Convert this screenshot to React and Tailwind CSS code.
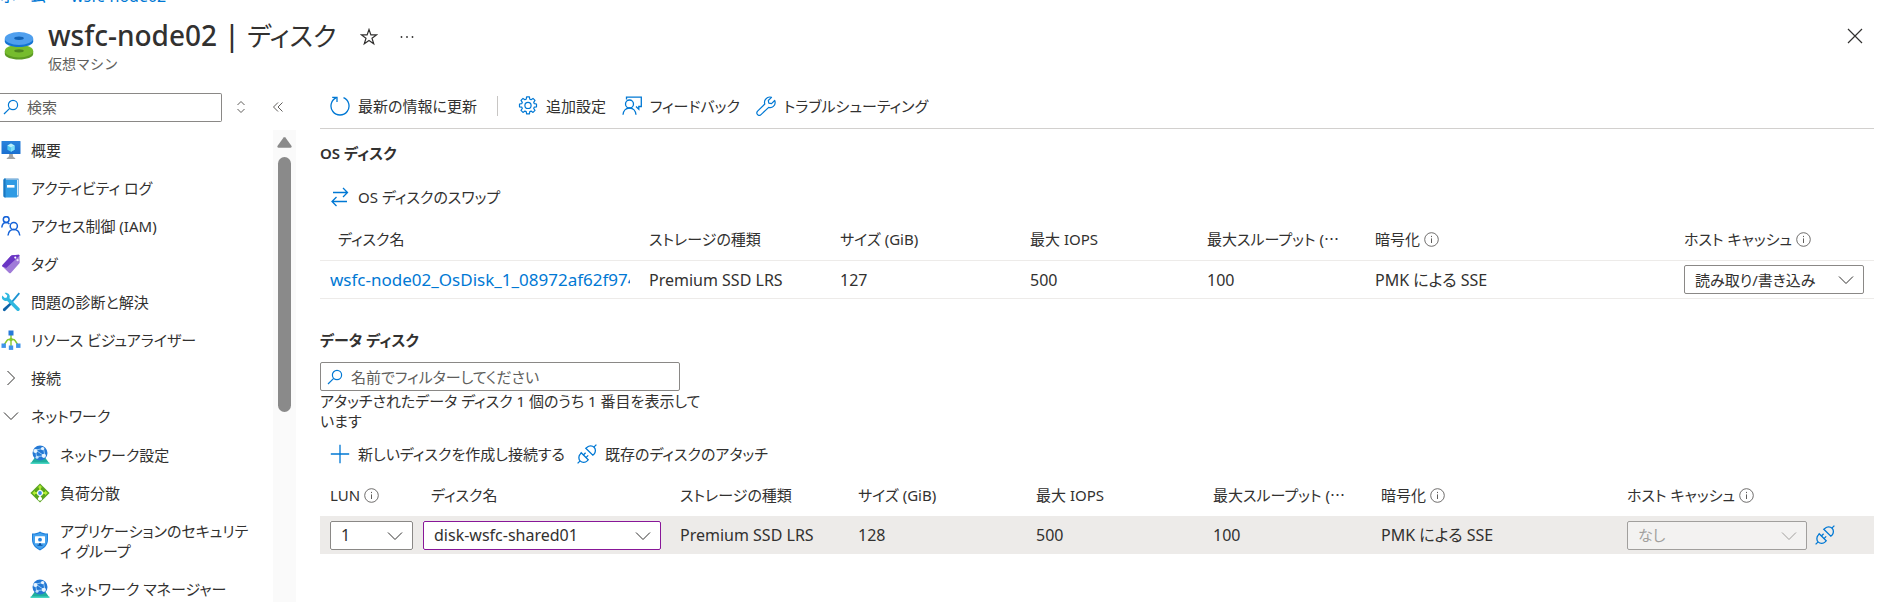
import React from 'react';

const menuItems = [
    { label: '概要', icon: MonitorIcon },
    { label: 'アクティビティ ログ', icon: LogIcon },
    { label: 'アクセス制御 (IAM)', icon: PeopleIcon },
    { label: 'タグ', icon: TagIcon },
    { label: '問題の診断と解決', icon: ToolsIcon },
    { label: 'リソース ビジュアライザー', icon: TreeIcon },
    { label: '接続', icon: ChevronRight },
    { label: 'ネットワーク', icon: ChevronDown },
];

const networkItems = [
    { lines: ['ネットワーク設定'], icon: GlobeIcon },
    { lines: ['負荷分散'], icon: BalancerIcon },
    { lines: ['アプリケーションのセキュリテ', 'ィ グループ'], icon: ShieldIcon },
    { lines: ['ネットワーク マネージャー'], icon: GlobeIcon },
];

function MonitorIcon() {
    return (
        <svg width="20" height="20" viewBox="0 0 20 20">
            <defs>
                <linearGradient id="monitor" x1="0" y1="0" x2="0" y2="1">
                    <stop offset="0" stopColor="#2a83dc" />
                    <stop offset="1" stopColor="#1a6fd0" />
                </linearGradient>
            </defs>
            <rect x="0.5" y="1" width="19" height="13" rx="0.6" fill="url(#monitor)" />
            <path d="M10 3.4l3.6 2v4.3L10 11.8 6.4 9.7V5.4z" fill="#50c8f0" />
            <path d="M10 3.4l3.6 2L10 7.5 6.4 5.4z" fill="#b9f0fb" />
            <path d="M10 7.5l3.6-2.1v4.3L10 11.8z" fill="#82dff7" />
            <path d="M8.2 14h3.6c0 2.4.5 3.5 2.4 4v1H5.8v-1c1.9-.5 2.4-1.6 2.4-4z" fill="#a3a3a3" />
        </svg>
    );
}

function LogIcon() {
    return (
        <svg width="20" height="20" viewBox="0 0 20 20">
            <path d="M4.2.6h13.3v18H4.2z" fill="#2b7fc4" />
            <path d="M5 1.5h12v16H5z" fill="#d7eefb" />
            <path d="M2.5 2.2c0-.9.7-1.6 1.6-1.6h.4v1.3H16v17.5H4.1c-.9 0-1.6-.7-1.6-1.6z" fill="#2f9be4" />
            <path d="M2.5 2.2c0-.9.7-1.6 1.6-1.6h.4v18.8h-.4c-.9 0-1.6-.7-1.6-1.6z" fill="#1b76bf" />
            <rect x="6" y="7" width="7.5" height="2.6" fill="#fff" />
        </svg>
    );
}

function PeopleIcon() {
    return (
        <svg width="20" height="20" viewBox="0 0 20 20" fill="none" stroke="#1663d8" strokeWidth="1.5">
            <circle cx="5.2" cy="3.6" r="2.9" />
            <path d="M.8 11.5c.3-3 2-5 4.4-5 1.3 0 2.4.5 3.2 1.5" />
            <circle cx="12.8" cy="10" r="3.6" />
            <path d="M7 19.5c.4-3.5 2.6-5.9 5.8-5.9s5.6 2.4 6 5.9" />
        </svg>
    );
}

function TagIcon() {
    return (
        <svg width="20" height="20" viewBox="0 0 20 20">
            <path d="M11.2 1.2l6.3-.4c.6 0 1 .4 1 1l.2 6.4c0 .5-.2 1-.5 1.3L9.8 18.9c-.5.5-1.2.5-1.7 0L1.5 12.6c-.5-.5-.5-1.2 0-1.7L10 1.7c.3-.3.7-.5 1.2-.5z" fill="#a07bd8" />
            <path d="M11.2 1.2l6.3-.4c.6 0 1 .4 1 1L5.2 14 1.5 12.6c-.5-.5-.5-1.2 0-1.7L10 1.7c.3-.3.7-.5 1.2-.5z" fill="#6a35c4" />
            <circle cx="14.3" cy="3.6" r="1.1" fill="#fff" />
            <circle cx="16.6" cy="6.2" r="1.1" fill="#e6dbf8" />
        </svg>
    );
}

function ToolsIcon() {
    return (
        <svg width="20" height="20" viewBox="0 0 20 20">
            <path d="M18.3 1.2L11 9.8" stroke="#1c93d2" strokeWidth="1.8" />
            <path d="M10.6 9.2l1.6 1.5-7.6 7.9c-.7.7-1.7.7-2.3.1s-.6-1.6.1-2.3z" fill="#0c62a8" />
            <path d="M3.6.9L6.3 3.6 5.8 5.5l-2 .5L1.2 3.4C.5 5.3 1 7.1 2.3 8.1c1.1.9 2.5 1 3.7.6l9.7 9.7c.8.8 1.9.8 2.6.1s.7-1.9-.1-2.6L8.5 6.2c.5-1.4.3-2.9-.8-4.1C6.6 1 5 .4 3.6.9z" fill="#2fb8e0" />
        </svg>
    );
}

function TreeIcon() {
    return (
        <svg width="20" height="20" viewBox="0 0 20 20">
            <path d="M10 5v11M3 15l3-4.500c.5-.7 1-1 1.800-1h4.400c.8 0 1.300.3 1.800 1l3 4.500" fill="none" stroke="#86c82e" strokeWidth="1.4" />
            <circle cx="10" cy="9.5" r="1.8" fill="#86c82e" />
            <rect x="7.5" y=".5" width="5" height="5" fill="#2679d8" />
            <rect x=".5" y="13.5" width="4.4" height="4.4" fill="#3f94ea" />
            <rect x="7.8" y="15.5" width="4.4" height="4.4" fill="#3f94ea" />
            <rect x="15.1" y="13.5" width="4.4" height="4.4" fill="#3f94ea" />
        </svg>
    );
}

function GlobeIcon() {
    return (
        <svg width="20" height="20" viewBox="0 0 20 20">
            <path d="M4.5 13h11l3.5 5H1z" fill="#1fae9c" />
            <path d="M.5 17.5h19V19H.5z" fill="#48d6c3" />
            <circle cx="10" cy="8" r="7.5" fill="#2478d4" />
            <path d="M5.5 5l8-1.5M5.5 5l1 6.500 7-.5M13.5 3.500l1.500 7.500M5.5 5l9 6" fill="none" stroke="#9fd0f7" strokeWidth=".9" />
            <circle cx="5.4" cy="6" r="2.1" fill="#e8f4fe" />
            <circle cx="12.6" cy="3.6" r="1.7" fill="#e8f4fe" />
            <circle cx="13.8" cy="10.8" r="2.1" fill="#e8f4fe" />
            <circle cx="7" cy="12.3" r="1.5" fill="#c3e2fb" />
        </svg>
    );
}

function BalancerIcon() {
    return (
        <svg width="20" height="20" viewBox="0 0 20 20">
            <path d="M10 .4L19.6 10 10 19.6.4 10z" fill="#5aa51e" />
            <path d="M10 2l2.4 2.6h-1.5v3H9.1v-3H7.6zM2.3 10l2.6-2.4v1.500h3v1.800h-3v1.500zM17.7 10l-2.6-2.400v1.500h-3v1.800h3v1.500z" fill="#b4ec36" />
            <circle cx="10" cy="10" r="3" fill="#fff" />
            <circle cx="10" cy="10" r="1.9" fill="#3b8ee8" />
            <path d="M9.2 12.5h1.6V14c.9.3 1.3.9 1.3 1.7 0 1.2-.9 2-2.1 2s-2.1-.8-2.1-2c0-.8.4-1.4 1.3-1.7z" fill="#fff" />
        </svg>
    );
}

function ShieldIcon() {
    return (
        <svg width="20" height="20" viewBox="0 0 20 20">
            <path d="M10 .5c2.3 1.5 4.5 2 8 2.1v6.2c0 5-3.5 8.5-8 10.7-4.5-2.2-8-5.700-8-10.700V2.6c3.500-.1 5.700-.6 8-2.100z" fill="#1f7fdb" />
            <path d="M10 1.7c2 1.3 4 1.8 7 1.9v5.2c0 4.4-3 7.500-7 9.500-4-2-7-5.100-7-9.500V3.6c3-.1 5-.6 7-1.900z" fill="#45a2ee" />
            <rect x="5" y="5.2" width="10" height="7" rx=".5" fill="#fff" />
            <path d="M9 12.2h2v1.500h1.500v1h-5v-1H9z" fill="#0d4f9e" />
            <circle cx="10" cy="8.7" r="1.9" fill="#2584de" />
        </svg>
    );
}

function DisksIcon() {
    return (
        <svg width="30" height="30" viewBox="0 0 30 30">
            <path d="M.8 20v3c0 3 6.3 5.5 14.2 5.5S29.2 26 29.2 23v-3z" fill="#5c9a24" />
            <ellipse cx="15" cy="20" rx="14.2" ry="6.5" fill="#76bc2d" />
            <ellipse cx="15" cy="19.8" rx="4.8" ry="1.6" fill="#4e8620" />
            <path d="M.8 8v2.5c0 3 6.3 5.5 14.2 5.5s14.2-2.500 14.2-5.500V8z" fill="#1273d3" />
            <ellipse cx="15" cy="7.5" rx="14.2" ry="6.5" fill="#4f9fee" />
            <ellipse cx="15" cy="7.3" rx="4.8" ry="1.7" fill="#1262b5" />
        </svg>
    );
}

function ChevronRight() {
    return (
        <svg width="20" height="20" viewBox="0 0 20 20" fill="none" stroke="#323130">
            <path d="M6.5 3l7 7-7 7" />
        </svg>
    );
}

function ChevronDown() {
    return (
        <svg width="20" height="20" viewBox="0 0 20 20" fill="none" stroke="currentColor">
            <path d="M3 6.5l7 7 7-7" />
        </svg>
    );
}

function SearchIcon() {
    return (
        <svg width="16" height="16" viewBox="0 0 16 16" fill="none" stroke="#0078d4" strokeWidth="1.2">
            <circle cx="10" cy="6" r="4.6" />
            <path d="M6.7 9.3L1 15" />
        </svg>
    );
}

function InfoIcon() {
    return (
        <svg className="shrink-0" width="15" height="15" viewBox="0 0 15 15" fill="none" stroke="#605e5c">
            <circle cx="7.5" cy="7.5" r="6.8" strokeWidth=".9" />
            <path d="M7.5 6.4v4.6M7.5 3.9v1.2" />
        </svg>
    );
}

function RefreshIcon() {
    return (
        <svg width="20" height="20" viewBox="0 0 20 20" fill="none" stroke="#0078d4" strokeWidth="1.3">
            <path d="M13.5 1.700A9 9 0 1 1 6.500 1.700" />
            <path d="M2.2 1.3h4.8v4.8" />
        </svg>
    );
}

function GearIcon() {
    return (
        <svg width="20" height="20" viewBox="0 0 20 20" fill="none" stroke="#0078d4" strokeWidth="1.2" strokeLinejoin="round">
            <path d="M8.600.9h2.800l.4 2.300 1.300.5 1.900-1.300 2 2-1.300 1.900.5 1.300 2.300.4v2.800l-2.300.4-.5 1.300 1.300 1.900-2 2-1.900-1.300-1.300.5-.4 2.300H8.600l-.4-2.300-1.300-.5L5 16.400l-2-2 1.300-1.900-.5-1.300-2.300-.4V8l2.300-.4.5-1.300L3 4.400l2-2 1.900 1.300 1.300-.5z" />
            <circle cx="10" cy="9.4" r="3.1" />
        </svg>
    );
}

function FeedbackIcon() {
    return (
        <svg width="20" height="20" viewBox="0 0 20 20" fill="none" stroke="#0078d4" strokeWidth="1.3">
            <path d="M4.5 3.5V1.2h14.8v9.3h-2.5v2.7l-2.8-2.7" />
            <circle cx="7.5" cy="8" r="4" />
            <path d="M1 18.8c.3-4 2.9-6.800 6.500-6.800s6.200 2.800 6.500 6.800" />
        </svg>
    );
}

function WrenchIcon() {
    return (
        <svg width="20" height="20" viewBox="0 0 20 20" fill="none" stroke="#0078d4" strokeWidth="1.2" strokeLinejoin="round">
            <path d="M15.5 1.3l-3.2 3.2.5 2.7 2.7.5 3.2-3.2c.9 2.4.2 4.6-1.3 5.9-1.3 1.2-3 1.5-4.7 1L5 18.6c-1 .9-2.5.9-3.400 0s-.9-2.400 0-3.400L8.800 8c-.6-1.800-.3-3.600 1-5C11.200 1.400 13.300.6 15.500 1.300z" />
        </svg>
    );
}

function SwapIcon() {
    return (
        <svg width="20" height="20" viewBox="0 0 20 20" fill="none" stroke="#0078d4" strokeWidth="1.3">
            <path d="M3 5.5h14.5M13 1l4.5 4.5L13 10M17 14.500H2M6.5 10L2 14.500 6.5 19" />
        </svg>
    );
}

function PlusIcon() {
    return (
        <svg width="20" height="20" viewBox="0 0 20 20" fill="none" stroke="#0078d4" strokeWidth="1.3">
            <path d="M10 .8v18.4M.8 10h18.4" />
        </svg>
    );
}

function PlugIcon() {
    return (
        <svg width="20" height="20" viewBox="0 0 20 20" fill="none" stroke="#0078d4" strokeWidth="1.3">
            <path d="M.6 19.4l2.300-2.300M17.1 2.900L19.4.6" />
            <path d="M4.200 8.800l7 7-1 1.100c-1.900 1.900-5 2-6.900.2s-1.900-5-.1-7z" />
            <path d="M8.800 4.200l7 7 1.100-1c1.900-1.900 2-5 .2-6.900s-5-1.900-7-.1z" />
            <path d="M6.400 11l2.200-2.200M9 13.600l2.200-2.200" />
        </svg>
    );
}

function CommandButton({ icon: Icon, children }) {
    return (
        <button type="button" className="flex h-8 items-center gap-2 text-[15px] leading-5 whitespace-nowrap">
            <Icon />
            <span>{children}</span>
        </button>
    );
}

function Dropdown({ label, value, className, disabled }) {
    return (
        <div className={`relative ${className}`}>
            <select
                aria-label={label}
                disabled={disabled}
                className="block h-[29px] w-full appearance-none rounded-xs border border-inherit bg-inherit pr-7 pl-[10px] leading-5"
            >
                <option>{value}</option>
            </select>
            <span className="pointer-events-none absolute top-[5px] right-[8px]">
                <ChevronDown />
            </span>
        </div>
    );
}

function HeaderCell({ children, info, className = 'pl-[10px]' }) {
    return (
        <th scope="col" className={`overflow-hidden pb-[2px] text-left text-[15px] font-normal whitespace-nowrap ${className}`}>
            <div className="flex items-center gap-1">
                <span>{children}</span>
                {info && <InfoIcon />}
            </div>
        </th>
    );
}

function Sidebar() {
    return (
        <aside className="w-[296px] shrink-0 text-[15px] leading-5">
            <div className="flex h-[46px] items-center">
                <label className="flex h-[29px] w-[222px] items-center gap-2 rounded-r-xs border border-l-0 border-[#8a8886] pl-[3px]">
                    <SearchIcon />
                    <input type="search" aria-label="検索" placeholder="検索" className="w-40 outline-none placeholder:text-[#605e5c]" />
                </label>
                <button type="button" aria-label="すべて展開" className="ml-3">
                    <svg width="14" height="14" viewBox="0 0 14 14" fill="none" stroke="#605e5c">
                        <path d="M3.5 5L7 1.5 10.5 5M3.5 9L7 12.5 10.5 9" />
                    </svg>
                </button>
                <button type="button" aria-label="折りたたむ" className="ml-6">
                    <svg width="12" height="12" viewBox="0 0 12 12" fill="none" stroke="#605e5c">
                        <path d="M6 1.5L1.5 6 6 10.5M10.5 1.5L6 6l4.5 4.5" />
                    </svg>
                </button>
            </div>
            <div className="flex justify-between">
                <nav className="pt-px">
                    <ul>
                        {menuItems.map(({ label, icon: Icon }) => (
                            <li key={label}>
                                <a href="#" className="flex h-[38px] items-center gap-[10px] pl-px whitespace-nowrap">
                                    <Icon />
                                    {label}
                                </a>
                            </li>
                        ))}
                    </ul>
                    <ul className="pt-px">
                        {networkItems.map(({ lines, icon: Icon }) => (
                            <li key={lines[0]}>
                                <a href="#" className="flex items-center gap-[10px] py-[9px] pl-[30px] whitespace-nowrap">
                                    <Icon />
                                    <span>
                                        {lines.map((line) => (
                                            <span key={line} className="block">{line}</span>
                                        ))}
                                    </span>
                                </a>
                            </li>
                        ))}
                    </ul>
                </nav>
                {/* Scroll bar */}
                <div className="flex w-[23px] shrink-0 flex-col items-center gap-[9px] bg-[#fafafa] pt-[7px]">
                    <svg width="15" height="11" viewBox="0 0 15 11" fill="#8a8a8a">
                        <path d="M6.6.6c.5-.6 1.3-.6 1.8 0l6 8.2c.6.9.2 1.9-.9 1.9h-12c-1.1 0-1.5-1-.9-1.9z" />
                    </svg>
                    <div className="h-[255px] w-[13px] rounded-full bg-[#8a8a8a]"></div>
                </div>
            </div>
        </aside>
    );
}

function OsDiskTable() {
    return (
        <table className="mt-[7px] w-full table-fixed border-separate border-spacing-0">
            <colgroup>
                <col className="w-[319px]" />
                <col className="w-[191px]" />
                <col className="w-[190px]" />
                <col className="w-[177px]" />
                <col className="w-[168px]" />
                <col />
                <col className="w-[200px]" />
            </colgroup>
            <thead>
                <tr className="h-[41px] *:border-b *:border-[#edebe9]">
                    <HeaderCell className="pl-[18px]">ディスク名</HeaderCell>
                    <HeaderCell>ストレージの種類</HeaderCell>
                    <HeaderCell>サイズ (GiB)</HeaderCell>
                    <HeaderCell>最大 IOPS</HeaderCell>
                    <HeaderCell>最大スループット (⋯</HeaderCell>
                    <HeaderCell info>暗号化</HeaderCell>
                    <HeaderCell info>ホスト キャッシュ</HeaderCell>
                </tr>
            </thead>
            <tbody>
                <tr className="h-[38px] *:border-b *:border-[#edebe9] *:pl-[10px]">
                    <td className="pr-[9px]">
                        <a href="#" className="block overflow-hidden text-[17px] whitespace-nowrap text-[#0078d4]">wsfc-node02_OsDisk_1_08972af62f974</a>
                    </td>
                    <td>Premium SSD LRS</td>
                    <td>127</td>
                    <td>500</td>
                    <td>100</td>
                    <td>PMK による SSE</td>
                    <td>
                        <Dropdown label="ホスト キャッシュ" value="読み取り/書き込み" className="w-[180px] border-[#8a8886] bg-white text-[15px]" />
                    </td>
                </tr>
            </tbody>
        </table>
    );
}

function DataDiskTable() {
    return (
        <table className="mt-[6px] w-full table-fixed border-separate border-spacing-0">
            <colgroup>
                <col className="w-[93px]" />
                <col className="w-[257px]" />
                <col className="w-[178px]" />
                <col className="w-[178px]" />
                <col className="w-[177px]" />
                <col className="w-[168px]" />
                <col />
                <col className="w-[257px]" />
            </colgroup>
            <thead>
                <tr className="h-10">
                    <HeaderCell info>LUN</HeaderCell>
                    <HeaderCell className="pl-[18px]">ディスク名</HeaderCell>
                    <HeaderCell>ストレージの種類</HeaderCell>
                    <HeaderCell>サイズ (GiB)</HeaderCell>
                    <HeaderCell>最大 IOPS</HeaderCell>
                    <HeaderCell>最大スループット (⋯</HeaderCell>
                    <HeaderCell info>暗号化</HeaderCell>
                    <HeaderCell info>ホスト キャッシュ</HeaderCell>
                </tr>
            </thead>
            <tbody>
                <tr className="h-[38px] bg-[#edebe9] *:pl-[10px]">
                    <td>
                        <Dropdown label="LUN" value="1" className="w-[83px] border-[#8a8886] bg-white" />
                    </td>
                    <td>
                        <Dropdown label="ディスク名" value="disk-wsfc-shared01" className="w-[238px] border-[#881798] bg-white" />
                    </td>
                    <td>Premium SSD LRS</td>
                    <td>128</td>
                    <td>500</td>
                    <td>100</td>
                    <td>PMK による SSE</td>
                    <td>
                        <div className="flex items-center gap-2">
                            <Dropdown label="ホスト キャッシュ" value="なし" disabled className="w-[180px] border-[#a19f9d] bg-[#f3f2f1] text-[15px] text-[#a19f9d]" />
                            <button type="button" aria-label="デタッチ">
                                <PlugIcon />
                            </button>
                        </div>
                    </td>
                </tr>
            </tbody>
        </table>
    );
}

export default function App() {
    return (
        <div className="h-screen overflow-hidden bg-white font-['Noto_Sans','Noto_Sans_CJK_JP',sans-serif] text-base leading-5 text-[#323130] [font-feature-settings:'palt']">
            {/* Breadcrumb, scrolled almost out of view */}
            <nav className="flex h-[6px] items-end gap-2 overflow-hidden text-[#0078d4]">
                <a href="#">ホーム</a>
                <span className="text-[#605e5c]">&gt;</span>
                <a href="#">wsfc-node02</a>
            </nav>

            <header className="flex h-[78px] items-start justify-between pr-[27px] pl-1">
                <div className="flex items-start">
                    <span className="mt-[25px]">
                        <DisksIcon />
                    </span>
                    <div className="ml-[14px]">
                        <h1 className="mt-[9px] text-[28px] leading-10 font-medium">
                            wsfc-node02 | <span className="text-[26px] font-normal">ディスク</span>
                        </h1>
                        <p className="text-sm leading-4 text-[#605e5c] [font-feature-settings:normal]">仮想マシン</p>
                    </div>
                    <button type="button" aria-label="お気に入り" className="mt-[22px] ml-6">
                        <svg width="18" height="18" viewBox="0 0 18 18" fill="none" stroke="#323130" strokeWidth="1.2">
                            <path d="M9 1.5l1.9 5.4h5.6L12 10.3l1.7 5.5L9 12.5l-4.7 3.3L6 10.3 1.5 6.9h5.6z" />
                        </svg>
                    </button>
                    <button type="button" aria-label="その他" className="mt-[22px] ml-5">
                        <svg width="18" height="18" viewBox="0 0 18 18" fill="#323130">
                            <circle cx="3.5" cy="9" r=".9" />
                            <circle cx="9" cy="9" r=".9" />
                            <circle cx="14.5" cy="9" r=".9" />
                        </svg>
                    </button>
                </div>
                <button type="button" aria-label="閉じる" className="mt-[22px]">
                    <svg width="16" height="16" viewBox="0 0 16 16" fill="none" stroke="#323130" strokeWidth="1.2">
                        <path d="M1 1l14 14M15 1L1 15" />
                    </svg>
                </button>
            </header>

            <div className="flex">
                <Sidebar />
                <main className="mr-4 ml-6 min-w-0 flex-1">
                    <div className="flex h-[45px] items-center border-b border-[#d2d0ce] pl-[10px]">
                        <CommandButton icon={RefreshIcon}>最新の情報に更新</CommandButton>
                        <div className="mx-5 h-5 w-px bg-[#c8c6c4]"></div>
                        <div className="flex gap-4">
                            <CommandButton icon={GearIcon}>追加設定</CommandButton>
                            <CommandButton icon={FeedbackIcon}>フィードバック</CommandButton>
                            <CommandButton icon={WrenchIcon}>トラブルシューティング</CommandButton>
                        </div>
                    </div>

                    <h2 className="mt-3 mb-4 text-[15px] leading-6 font-semibold">OS ディスク</h2>
                    <div className="flex pl-[10px]">
                        <CommandButton icon={SwapIcon}>OS ディスクのスワップ</CommandButton>
                    </div>
                    <OsDiskTable />

                    <h2 className="mt-[29px] mb-[10px] text-[15px] leading-6 font-semibold">データ ディスク</h2>
                    <label className="flex h-[29px] w-[360px] items-center gap-2 rounded-xs border border-[#8a8886] pl-[6px] text-[15px]">
                        <SearchIcon />
                        <input type="search" aria-label="名前でフィルター" placeholder="名前でフィルターしてください" className="flex-1 outline-none placeholder:text-[#605e5c]" />
                    </label>
                    <p className="mb-[7px] text-[15px] leading-5 whitespace-nowrap">
                        アタッチされたデータ ディスク 1 個のうち 1 番目を表示して
                        <br />
                        います
                    </p>
                    <div className="flex gap-3 pl-[10px]">
                        <CommandButton icon={PlusIcon}>新しいディスクを作成し接続する</CommandButton>
                        <CommandButton icon={PlugIcon}>既存のディスクのアタッチ</CommandButton>
                    </div>
                    <DataDiskTable />
                </main>
            </div>
        </div>
    );
}
